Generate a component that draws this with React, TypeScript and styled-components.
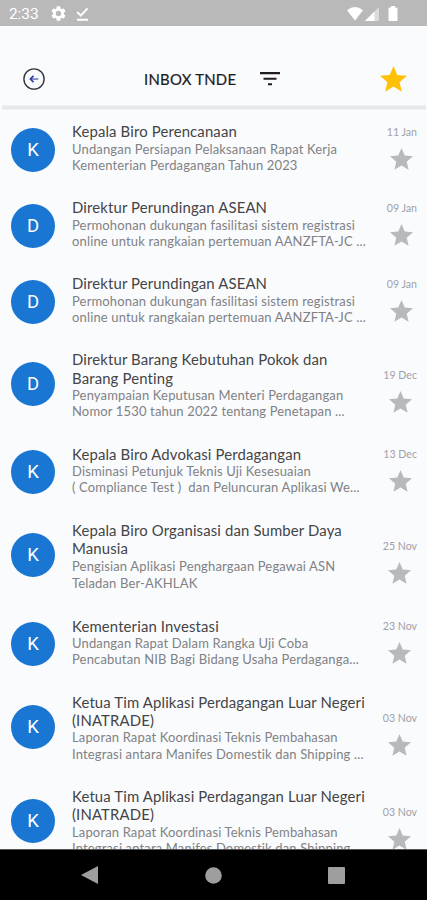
import React from 'react';
import styled, { createGlobalStyle } from 'styled-components';

const GlobalStyle = createGlobalStyle`
  * { box-sizing: border-box; }
  body { margin: 0; background: #fafbfd; }
`;

const Screen = styled.div`
  width: 427px;
  height: 900px;
  display: flex;
  flex-direction: column;
  overflow: hidden;
  background: #fafbfd;
  font-family: Lato, sans-serif;
`;

const StatusBar = styled.div`
  flex: none;
  height: 26px;
  padding: 1px 28px 0 9px;
  display: flex;
  align-items: center;
  background: #b9b9ba;
  color: #fff;
  svg { display: block; }
`;

const Clock = styled.span`
  width: 42px;
  font: 400 15.5px/20px Roboto, sans-serif;
  letter-spacing: -0.1px;
`;

const StatusIcons = styled.div<{ $gap: number; $end?: boolean }>`
  display: flex;
  align-items: center;
  gap: ${(p) => p.$gap}px;
  margin-left: ${(p) => (p.$end ? 'auto' : '0')};
`;

const Header = styled.header`
  flex: none;
  height: 79px;
  padding: 24px 20px 0 22px;
  display: flex;
  align-items: flex-start;
  svg { display: block; }
`;

const Divider = styled.div`
  flex: none;
  height: 5px;
  margin: 0 1px 0 2px;
  background: linear-gradient(#f1f2f4, #e6e7e9 35%, #e6e7e9 65%, #f4f5f7);
`;

const IconButton = styled.button<{ $left?: string }>`
  border: 0;
  padding: 0;
  background: none;
  height: 58px;
  display: flex;
  align-items: center;
  margin-left: ${(p) => p.$left || '0'};
`;

const Heading = styled.h1`
  margin: 0 0 0 98px;
  width: 93px;
  font-size: 14.9px;
  letter-spacing: 0.25px;
  line-height: 58px;
  font-weight: 400;
  color: #1c1c1e;
  white-space: nowrap;
  -webkit-text-stroke: 0.2px #1c1c1e;
`;

const List = styled.main`
  flex: 1;
  min-height: 0;
  overflow: hidden;
  padding-top: 12.3px;
`;

const Row = styled.article`
  display: flex;
  align-items: flex-start;
  padding: 0 10px 25px 11px;
`;

const Avatar = styled.div<{ $tall: boolean }>`
  flex: none;
  width: 44px;
  height: 44px;
  margin-top: ${(p) => (p.$tall ? 12 : 5.5)}px;
  border-radius: 50%;
  display: flex;
  align-items: center;
  justify-content: center;
  background: #1976d2;
  color: #fff;
  font: 400 18.5px/22px Roboto, sans-serif;
`;

const Message = styled.div`
  flex: 1;
  min-width: 0;
  margin-left: 17px;
  white-space: pre;
`;

const Sender = styled.div`
  font-size: 14.9px;
  letter-spacing: 0.14px;
  line-height: 18.4px;
  color: #444446;
`;

const Subject = styled.div<{ $lead?: number }>`
  font-size: 13px;
  letter-spacing: 0.15px;
  line-height: ${(p) => p.$lead || 16.3}px;
  color: #808184;
`;

const Meta = styled.div<{ $tall: boolean }>`
  flex: none;
  margin-top: ${(p) => (p.$tall ? 18 : 2.5)}px;
  display: flex;
  flex-direction: column;
  align-items: center;
  font-size: 10.6px;
  line-height: 14px;
  color: #a0a1a8;
  svg { display: block; margin-top: 9px; }
`;

const NavBar = styled.nav`
  flex: none;
  height: 51px;
  padding: 0 82px 0 81px;
  display: flex;
  align-items: center;
  justify-content: space-between;
  border-top: 1px solid #555;
  background: #000;
`;

function Star({ size, color }: { size: number; color: string }) {
  return (
    <svg width={size} height={size} viewBox="2 2 20 20" fill={color}>
      <path d="M12 17.27 18.18 21l-1.64-7.03L22 9.24l-7.19-.61L12 2 9.19 8.63 2 9.24l5.46 4.73L5.82 21z" />
    </svg>
  );
}

interface Mail {
  sender: string[];
  subject: string[];
  date: string;
  lead?: number;
}

const ketua: Mail = {
  sender: ['Ketua Tim Aplikasi Perdagangan Luar Negeri', '(INATRADE)'],
  subject: ['Laporan Rapat Koordinasi Teknis Pembahasan', 'Integrasi antara Manifes Domestik dan Shipping ...'],
  date: '03 Nov',
};

const perundingan: Mail = {
  sender: ['Direktur Perundingan ASEAN'],
  subject: ['Permohonan dukungan fasilitasi sistem registrasi', 'online untuk rangkaian pertemuan AANZFTA-JC ...'],
  date: '09 Jan',
};

const mails: Mail[] = [
  {
    sender: ['Kepala Biro Perencanaan'],
    subject: ['Undangan Persiapan Pelaksanaan Rapat Kerja', 'Kementerian Perdagangan Tahun 2023'],
    date: '11 Jan',
  },
  perundingan,
  perundingan,
  {
    sender: ['Direktur Barang Kebutuhan Pokok dan', 'Barang Penting'],
    subject: ['Penyampaian Keputusan Menteri Perdagangan', 'Nomor 1530 tahun 2022 tentang Penetapan ...'],
    date: '19 Dec',
  },
  {
    sender: ['Kepala Biro Advokasi Perdagangan'],
    subject: ['Disminasi Petunjuk Teknis Uji Kesesuaian', '( Compliance Test )  dan Peluncuran Aplikasi We...'],
    date: '13 Dec',
  },
  {
    sender: ['Kepala Biro Organisasi dan Sumber Daya', 'Manusia'],
    subject: ['Pengisian Aplikasi Penghargaan Pegawai ASN', 'Teladan Ber-AKHLAK'],
    date: '25 Nov',
    lead: 17,
  },
  {
    sender: ['Kementerian Investasi'],
    subject: ['Undangan Rapat Dalam Rangka Uji Coba', 'Pencabutan NIB Bagi Bidang Usaha Perdaganga...'],
    date: '23 Nov',
  },
  ketua,
  ketua,
];

function MailRow({ mail }: { mail: Mail }) {
  const tall = mail.sender.length > 1;
  return (
    <Row>
      <Avatar $tall={tall}>{mail.sender[0][0]}</Avatar>
      <Message>
        {mail.sender.map((line) => <Sender key={line}>{line}</Sender>)}
        {mail.subject.map((line) => <Subject key={line} $lead={mail.lead}>{line}</Subject>)}
      </Message>
      <Meta $tall={tall}>
        {mail.date}
        <Star size={23} color="#b8b9ba" />
      </Meta>
    </Row>
  );
}

export default function App() {
  return (
    <>
      <GlobalStyle />
      <Screen>
        <StatusBar>
          <Clock>2:33</Clock>
          <StatusIcons $gap={10}>
            <svg width="15" height="15" viewBox="2 2 20 20" fill="#fff">
              <path d="M19.14 12.94c.04-.3.06-.61.06-.94 0-.32-.02-.64-.07-.94l2.03-1.58c.18-.14.23-.41.12-.61l-1.92-3.32c-.12-.22-.37-.29-.59-.22l-2.39.96c-.5-.38-1.03-.7-1.62-.94l-.36-2.54c-.04-.24-.24-.41-.48-.41h-3.84c-.24 0-.43.17-.47.41l-.36 2.54c-.59.24-1.13.57-1.62.94l-2.39-.96c-.22-.08-.47 0-.59.22L2.74 8.87c-.12.21-.08.47.12.61l2.03 1.58c-.05.3-.09.63-.09.94s.02.64.07.94l-2.03 1.58c-.18.14-.23.41-.12.61l1.92 3.32c.12.22.37.29.59.22l2.39-.96c.5.38 1.03.7 1.62.94l.36 2.54c.05.24.24.41.48.41h3.84c.24 0 .44-.17.47-.41l.36-2.54c.59-.24 1.13-.56 1.62-.94l2.39.96c.22.08.47 0 .59-.22l1.92-3.32c.12-.22.07-.47-.12-.61zM12 15.6A3.6 3.6 0 1 1 12 8.4a3.6 3.6 0 0 1 0 7.2z" />
            </svg>
            <svg width="13" height="14" viewBox="0 0 13 14" fill="none" stroke="#fff" strokeWidth="1.9">
              <path d="m1.2 5 3.6 3.6L11.5 1.3M1 12.7h11" />
            </svg>
          </StatusIcons>
          <StatusIcons $gap={2} $end>
            <svg width="16" height="14" viewBox="0 0 16 14" fill="#fff">
              <path d="M0 3.2Q8-3 16 3.2L8 13.5Z" />
            </svg>
            <svg width="14" height="14" viewBox="0 0 14 14" fill="#fff">
              <path d="M0 14 14 0v14Z" opacity=".5" />
              <path d="M0 14 9.5 4.5V14Z" />
            </svg>
            <svg width="18" height="15" viewBox="0 0 18 15" fill="#fff">
              <path d="M8 1.5h2V0h4v1.5h1.5q1 0 1 1V14q0 1-1 1h-7q-1 0-1-1V2.5q0-1 1-1Z" />
            </svg>
          </StatusIcons>
        </StatusBar>
        <Header>
          <IconButton aria-label="Back">
            <svg width="24" height="24" viewBox="0 0 24 24" fill="none">
              <circle cx="12" cy="12" r="10.1" stroke="#34353f" strokeWidth="1.4" />
              <path d="M16.3 12H9" stroke="#5a66b5" strokeWidth="1.4" />
              <path d="M11.5 8.8 8.4 12l3.1 3.2" stroke="#303f9f" strokeWidth="1.7" />
            </svg>
          </IconButton>
          <Heading>INBOX TNDE</Heading>
          <IconButton aria-label="Filter" $left="23px">
            <svg width="20" height="14" viewBox="0 0 20 14" fill="#201c20">
              <path d="M0 0h20v2.2H0zM3.5 5.7h13v2.1h-13zM8 11.2h4v2H8z" />
            </svg>
          </IconButton>
          <IconButton aria-label="Favourites" $left="auto">
            <Star size={27} color="#ffc107" />
          </IconButton>
        </Header>
        <Divider />
        <List>
          {mails.map((mail, i) => <MailRow key={i} mail={mail} />)}
        </List>
        <NavBar>
          <svg width="17" height="18" viewBox="0 0 17 18" fill="#9e9e9e"><path d="M0 9 17 0v18Z" /></svg>
          <svg width="17" height="17" viewBox="0 0 17 17" fill="#9e9e9e"><circle cx="8.5" cy="8.5" r="8.3" /></svg>
          <svg width="17" height="17" viewBox="0 0 17 17" fill="#9e9e9e"><rect width="17" height="17" rx="1" /></svg>
        </NavBar>
      </Screen>
    </>
  );
}
